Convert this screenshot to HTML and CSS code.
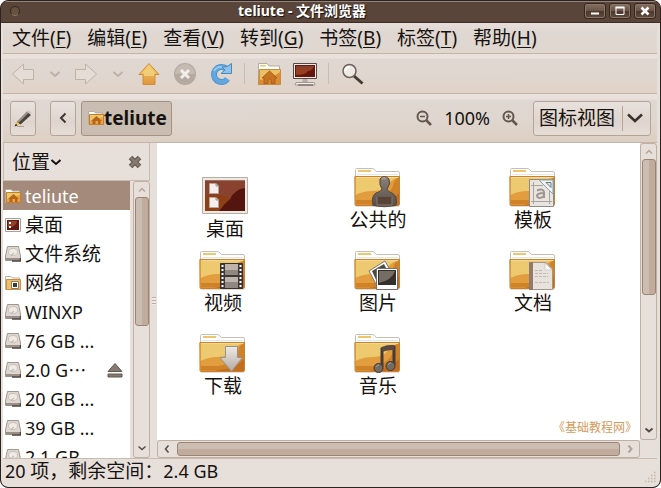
FILE: index.html
```html
<!DOCTYPE html>
<html lang="zh-CN">
<head>
<meta charset="utf-8">
<title>teliute - 文件浏览器</title>
<link rel="stylesheet" href="styles.css">
</head>
<body>
<svg class="defs" aria-hidden="true">
  <defs>
    <linearGradient id="steel" x1="0" y1="0" x2="0" y2="1"><stop offset="0" stop-color="#efe9e5"/><stop offset="1" stop-color="#b3a9a2"/></linearGradient>
    <linearGradient id="stone" x1="0" y1="0" x2="0" y2="1"><stop offset="0" stop-color="#8b8279"/><stop offset="1" stop-color="#554b45"/></linearGradient>
    <linearGradient id="gold" x1="0" y1="0" x2="0" y2="1"><stop offset="0" stop-color="#f0cd74"/><stop offset="1" stop-color="#e0963a"/></linearGradient>
    <symbol id="folder" viewBox="0 0 48 40">
      <path d="M1.500 9V1.500Q1.500.5 2.500.5H18Q20 .5 21 2L22.500 3.500H44Q45.500 3.500 45.500 5V9" fill="#fff" stroke="#c9beb5"/>
      <path d="M4 2H17V4H4Z" fill="#eec66b"/>
      <path d="M3 6.500H44" stroke="#ece5df"/>
      <path d="M2 38.500H45" stroke="#e8dcd2"/>
      <path d="M.5 9Q.5 8 1.500 8H45Q46 8 46 9L45 36.500Q45 37.500 44 37.500H2Q1 37.500 1 36.500Z" fill="#e19d3e"/>
      <path d="M1.500 9H45Q38 11 34 16Q30 23 19 23Q9 23 1.500 27Z" fill="#edca70"/>
      <path d="M45.500 9.500V36.500H2V32Q11 32 20 32Q37 29 40 14Q42 10 45.500 9.500Z" fill="#d08229"/>
      <path d="M20 36Q38 34 45 25V37H15Z" fill="#c36c20"/>
      <path d="M1 8.500H45.500V36.500Q45.500 37.500 44.500 37.500H2Q1 37.500 1 36.500Z" fill="none" stroke="#c7812f"/>
      <path d="M2 9.500H44" stroke="#f5d992"/>
    </symbol>
    <symbol id="mini-home" viewBox="0 0 16 16">
      <path d="M.5 14.500V1.500H6L7.500 3H14.500V14.500Z" fill="#fff" stroke="#b9aca0"/>
      <path d="M1.500 4.500H15.500V14.500H1.500Z" fill="#e8a448" stroke="#c77d2c"/>
      <path d="M2 5H15V7L8 9 2 11Z" fill="#edc76c"/>
      <path d="M8.500 6L14 11H12.500V14H10V11H7.500V14H4.500V11H3Z" fill="#b96519"/>
    </symbol>
    <symbol id="disk" viewBox="0 0 16 16">
      <path d="M2.500 .5H13.500L15.500 10V14.500H.5V10Z" fill="#ded7d1" stroke="#a0968d"/>
      <path d="M1 12H15V14.500H1Z" fill="#9a8f86"/>
      <path d="M7 15H15.500V12" fill="none" stroke="#4e4640" stroke-width="1.500"/>
      <ellipse cx="8" cy="6" rx="4.500" ry="3.500" fill="#eeeae6" stroke="#c9c0b8"/>
      <path d="M6 9.500L9 7" stroke="#b3a99f"/>
    </symbol>
    <symbol id="mini-desktop" viewBox="0 0 16 16">
      <path d="M.5 1.500H15.500V14.500H.5Z" fill="#fff" stroke="#ac9e93"/>
      <path d="M2 3H14V13H2Z" fill="#611a12"/><path d="M3 4H12Q11 8 7 10H3Z" fill="#944227"/>
      <path d="M4 5H6V7H4ZM4 9H6V11H4Z" fill="#fff"/>
    </symbol>
    <symbol id="mini-net" viewBox="0 0 16 16">
      <path d="M.5 14.500V1.500H6L7.500 3H14.500V14.500Z" fill="#fff" stroke="#b9aca0"/>
      <path d="M1.500 4.500H15.500V14.500H1.500Z" fill="#edc063" stroke="#d08d37"/>
      <path d="M6.500 6.500H13.500V13.500H6.500Z" fill="#fff" stroke="#887d74"/><path d="M8 8H12V12H8Z" fill="#3e3935"/>
    </symbol>
    <symbol id="down" viewBox="0 0 12 12"><path d="M1.500 4L6 8 10.500 4" fill="none" stroke="currentColor" stroke-width="2"/></symbol>
    <symbol id="arrow" viewBox="0 0 24 24"><path d="M1.500 12L12.500 2V7.500H22.500V17.500H12.500V22Z" fill="#e5dcd5" stroke="#c0b2a5"/></symbol>
  </defs>
</svg>

<div class="window">
  <header class="titlebar">
    <span class="orb"></span>
    <h1>teliute - 文件浏览器</h1>
    <div class="wm">
      <button aria-label="最小化"><svg viewBox="0 0 20 14"><path d="M6 9.500H14" stroke="#fff" stroke-width="2"/></svg></button>
      <button aria-label="最大化"><svg viewBox="0 0 20 14"><path d="M6 3.500H14V10.500H6Z" fill="none" stroke="#fff"/><path d="M5.500 3.500H14.500" stroke="#fff" stroke-width="2"/></svg></button>
      <button aria-label="关闭"><svg viewBox="0 0 20 14"><path d="M6.500 3.500L13.500 10.500M13.500 3.500L6.500 10.500" stroke="#fff" stroke-width="2.500"/></svg></button>
    </div>
  </header>

  <div class="frame">
  <nav class="menubar">
    <button>文件(<u>F</u>)</button><button>编辑(<u>E</u>)</button><button>查看(<u>V</u>)</button><button>转到(<u>G</u>)</button><button>书签(<u>B</u>)</button><button>标签(<u>T</u>)</button><button>帮助(<u>H</u>)</button>
  </nav>

  <div class="toolbar">
    <button aria-label="后退" disabled><svg class="i24"><use href="#arrow"/></svg></button>
    <button class="drop" aria-label="后退历史" disabled><svg class="i12"><use href="#down"/></svg></button>
    <button aria-label="前进" disabled><svg class="i24" viewBox="0 0 24 24"><path d="M22.500 12L11.500 2V7.500H1.500V17.500H11.500V22Z" fill="#e5dcd5" stroke="#c0b2a5"/></svg></button>
    <button class="drop" aria-label="前进历史" disabled><svg class="i12"><use href="#down"/></svg></button>
    <button aria-label="向上"><svg class="i24" viewBox="0 0 24 24"><path d="M12 1.500L22 12.500H18V22.500H6V12.500H2Z" fill="url(#gold)" stroke="#d58d31"/><path d="M12 3.500L19.500 11.500H17V14H7V11.500H4.500Z" fill="#f0cd76"/></svg></button>
    <button aria-label="停止" disabled><svg class="i24" viewBox="0 0 24 24"><circle cx="12" cy="12" r="11" fill="#b5aaa1"/><path d="M2 12A10 10 0 0 1 22 12Z" fill="#c5bbb3"/><path d="M8 8L16 16M16 8L8 16" stroke="#f3eeea" stroke-width="3"/></svg></button>
    <button aria-label="重新载入"><svg class="i24" viewBox="0 0 24 24"><path d="M18.500 17A7.500 7.500 0 1 1 17 6.500" fill="none" stroke="#4f93d0" stroke-width="6"/><path d="M18.500 17A7.500 7.500 0 1 1 17 6.500" fill="none" stroke="#62a8df" stroke-width="4"/><path d="M5 9Q8 3 17 6" fill="none" stroke="#94c8ec" stroke-width="2"/><path d="M22.500 1.500V11.500H12L16 8 13 5 18 4.500Z" fill="#8ec2e8" stroke="#4788c4"/></svg></button>
    <span class="sep"></span>
    <button aria-label="主文件夹"><svg class="i24" viewBox="0 0 24 24"><path d="M1.500 22V1.500H10L12 4H22.500V8" fill="#fff" stroke="#b8aa9e"/><path d="M3 3H9V4.500H3Z" fill="#eec66b"/><path d="M2.500 7.500H23.500V22.500H1.500Z" fill="#da8d31" stroke="#c98a3a"/><path d="M3 8H23V10Q16 16 3 18Z" fill="#ebc166"/><path d="M12.500 9L20 16H18V21.500H14V17H11V21.500H7V16H5Z" fill="#c47422" stroke="#b0611a"/></svg></button>
    <button aria-label="计算机"><svg class="i24" viewBox="0 0 24 24"><path d="M.5 1.500H23.500V16.500H.5Z" fill="#eee9e5" stroke="#544a44"/><path d="M2 3H22V15H2Z" fill="#64160f"/><path d="M3 4H21Q19 9 15 9Q13 13 3 13Z" fill="#963e1d"/><path d="M3 4H21Q19 7 13 7H3Z" fill="#85402e"/><path d="M10 17H14L15 20H9Z" fill="#b7ada4"/><path d="M3 20.500H21L22 23H2Z" fill="#efebe7" stroke="#a49a92"/><path d="M5 23H20" stroke="#5d544d"/></svg></button>
    <span class="sep"></span>
    <button aria-label="搜索"><svg class="i24" viewBox="0 0 24 24"><path d="M13 14L21.500 21.500" stroke="#453b35" stroke-width="3"/><circle cx="8.500" cy="9" r="6.500" fill="#eee9e5" stroke="#6e625a" stroke-width="1.500"/><path d="M4.500 9Q4.500 5 8.500 5" fill="none" stroke="#fff" stroke-width="2"/></svg></button>
  </div>

  <div class="location">
    <button class="raised narrow" aria-label="编辑位置"><svg class="i20" viewBox="0 0 20 20"><path d="M3 15L14 3.500 18 7 7 17Z" fill="#4a413b"/><path d="M5 14L15 4" stroke="#9b938b" stroke-width="2"/><path d="M3 13L8 17 2 18Z" fill="#ecc879"/><path d="M1.500 18.500L3 15.500 4.500 17.500Z" fill="#302a25"/><path d="M14 3.500L15.500 2 19 5 17.500 6.500Z" fill="#cfc8c1"/><path d="M4 18.500H11" stroke="#aaa098"/></svg></button>
    <button class="raised narrow prev" aria-label="上一级"><svg class="i12" viewBox="0 0 12 12"><path d="M8.500 1.500L4 6 8.500 10.500" fill="none" stroke="#413732" stroke-width="2"/></svg></button>
    <button class="raised path"><svg class="i16"><use href="#mini-home"/></svg>teliute</button>
    <div class="zoom">
      <button aria-label="缩小"><svg class="i16" viewBox="0 0 16 16"><circle cx="6.500" cy="6.500" r="5" fill="none" stroke="#65574e" stroke-width="2"/><path d="M4 6.500H9" stroke="#65574e" stroke-width="1.500"/><path d="M10.500 10.500L15 15" stroke="#65574e" stroke-width="2.500"/></svg></button>
      <span class="latin">100%</span>
      <button aria-label="放大"><svg class="i16" viewBox="0 0 16 16"><circle cx="6.500" cy="6.500" r="5" fill="none" stroke="#65574e" stroke-width="2"/><path d="M4 6.500H9M6.500 4V9" stroke="#65574e" stroke-width="1.500"/><path d="M10.500 10.500L15 15" stroke="#65574e" stroke-width="2.500"/></svg></button>
    </div>
    <div class="combo raised">
      <select aria-label="视图"><option>图标视图</option><option>列表视图</option></select>
      <svg class="i20" viewBox="0 0 20 20"><path d="M3 6.500L10 13 17 6.500" fill="none" stroke="#3b302b" stroke-width="2.500"/></svg>
    </div>
  </div>

  <main>
    <aside>
      <div class="side-head">
        <button>位置<svg class="i12"><use href="#down"/></svg></button>
        <button aria-label="关闭侧边栏"><svg class="i16" viewBox="0 0 16 16"><path d="M3.500 3.500L12.500 12.500M12.500 3.500L3.500 12.500" stroke="#5f5650" stroke-width="5"/><path d="M4 4L12 12M12 4L4 12" stroke="#85796f" stroke-width="3"/></svg></button>
      </div>
      <div class="side-body">
        <ul class="places">
          <li class="on latin"><svg class="i16"><use href="#mini-home"/></svg><span>teliute</span></li>
          <li><svg class="i16"><use href="#mini-desktop"/></svg><span>桌面</span></li>
          <li><svg class="i16"><use href="#disk"/></svg><span>文件系统</span></li>
          <li><svg class="i16"><use href="#mini-net"/></svg><span>网络</span></li>
          <li class="latin"><svg class="i16"><use href="#disk"/></svg><span>WINXP</span></li>
          <li class="latin"><svg class="i16"><use href="#disk"/></svg><span>76 GB ...</span></li>
          <li class="latin"><svg class="i16"><use href="#disk"/></svg><span>2.0 G⋯</span><button class="eject" aria-label="弹出"><svg class="i16" viewBox="0 0 16 16"><path d="M8 1.500L15 9.500H1Z" fill="#847a72" stroke="#625850"/><path d="M1 12H15V15H1Z" fill="#847a72" stroke="#625850"/></svg></button></li>
          <li class="latin"><svg class="i16"><use href="#disk"/></svg><span>20 GB ...</span></li>
          <li class="latin"><svg class="i16"><use href="#disk"/></svg><span>39 GB ...</span></li>
          <li class="latin"><svg class="i16"><use href="#disk"/></svg><span>2.1 GB</span></li>
        </ul>
        <div class="vbar side-bar">
          <svg class="i12 tip" viewBox="0 0 12 12"><path d="M3 7.500L6 4.500 9 7.500" fill="none" stroke="#b7a698" stroke-width="1.500"/></svg>
          <div class="thumb"></div>
          <svg class="i12 end" viewBox="0 0 12 12"><path d="M2.500 4.500L6 7.500 9.500 4.500" fill="none" stroke="#574c45" stroke-width="1.500"/></svg>
        </div>
      </div>
    </aside>
    <div class="splitter"><i></i></div>
    <section class="pane">
      <div class="view">
        <div class="files">
          <figure class="low"><svg class="icon" viewBox="0 0 48 40"><path d="M1.500 .5H46.500V36.500H1.500Z" fill="#eee8e3" stroke="#b9ada4"/><path d="M4 3H44V34H4Z" fill="#55150f"/><path d="M4 4H44V11Q34 12 29 22Q22 27 18 34H4Z" fill="#8a4230"/><path d="M4 18Q18 16 30 21Q23 27 18 34H4Z" fill="#8d3f16"/><path d="M4 3.500H44" stroke="#967364"/><path d="M8.500 6.500H15L17.500 9V16.500H8.500ZM8.500 20.500H15L17.500 23V30.500H8.500Z" fill="#f3efec" stroke="#b7a298"/><path d="M15 6V9H18M15 20V23H18" fill="none" stroke="#9d9088"/></svg><figcaption>桌面</figcaption></figure>
          <figure><svg class="icon" viewBox="0 0 48 40"><use href="#folder"/><path d="M19 37.500Q17 28 22 25Q27 24 28 21Q25 17 26 11Q30 6 35 11Q37 16 33 21Q34 24 38 25Q44 28 42 37.500Q30 40 19 37.500Z" fill="url(#stone)" stroke="#514741"/><path d="M23 29V37H38V29" fill="#594339" stroke="#887a70"/><path d="M28 11Q30 9 32 11" fill="none" stroke="#a79b91" stroke-width="2"/></svg><figcaption>公共的</figcaption></figure>
          <figure><svg class="icon" viewBox="0 0 48 40"><use href="#folder"/><path d="M20.500 11.500H44.500V38.500H20.500Z" fill="#e9e4e0" stroke="#8e8983"/><path d="M24.500 14V36M40.500 20V36M22 17.500H34M22 33.500H43" stroke="#aaa39d"/><path d="M28 22.500Q34 20 35 24V30M35 25Q28 25 28 28Q29 32 35 28" fill="none" stroke="#9d958e" stroke-width="2"/><path d="M30 12L44 26V12Z" fill="#f2f3f2" stroke="#83a5b2"/><path d="M37 14.500H42V19.500Z" fill="#dfe7e8" stroke="#777"/></svg><figcaption>模板</figcaption></figure>
          <figure><svg class="icon" viewBox="0 0 48 40"><use href="#folder"/><path d="M21.500 12.500H43.500V37.500H21.500Z" fill="#3d3835" stroke="#37312e"/><path d="M26 13H39V24H26ZM26 26H39V37H26Z" fill="#bdb4ad"/><path d="M26 19H39V24H26ZM26 31H39V37H26Z" fill="#8f8780"/><path d="M23.500 14V38M41.500 14V38" stroke="#fff" stroke-width="2" stroke-dasharray="2 2"/></svg><figcaption>视频</figcaption></figure>
          <figure><svg class="icon" viewBox="0 0 48 40"><use href="#folder"/><path d="M15 20L31 10 39 24 23 35Z" fill="#fff" stroke="#80766e"/><path d="M18 20L30 13 35 23 23 31Z" fill="#514941"/><path d="M22.500 17.500H43.500V38.500H22.500Z" fill="#fff" stroke="#766e67"/><path d="M24 19H42V34H24Z" fill="#332f2c"/><path d="M25 20H41Q38 29 25 32Z" fill="#756d64"/></svg><figcaption>图片</figcaption></figure>
          <figure><svg class="icon" viewBox="0 0 48 40"><use href="#folder"/><path d="M20.500 11.500H37L43.500 18V38.500H20.500Z" fill="#e8e2dd" stroke="#a0968e"/><path d="M20 11H24V39H20Z" fill="#927b6d"/><path d="M36 12V19H43Z" fill="#fff" stroke="#d2c9c2"/><path d="M26 19.500H34M26 22.500H39M26 25.500H39M26 31.500H40" stroke="#c3bab2" stroke-dasharray="3 1"/></svg><figcaption>文档</figcaption></figure>
          <figure><svg class="icon" viewBox="0 0 48 40"><use href="#folder"/><path d="M26.500 12.500H38.500V23.500H43.500L32.500 37.500 21 23.500H26.500Z" fill="url(#steel)" stroke="#9c9187"/></svg><figcaption>下载</figcaption></figure>
          <figure><svg class="icon" viewBox="0 0 48 40"><use href="#folder"/><path d="M28 33V15Q35 12 40 13V31" fill="none" stroke="#453c36" stroke-width="3"/><path d="M28 15.500Q34 13 40 13.500" fill="none" stroke="#5c4a40" stroke-width="5"/><circle cx="24.500" cy="34" r="4.500" fill="#746b63" stroke="#3d3530"/><circle cx="36.500" cy="32" r="4.500" fill="#746b63" stroke="#3d3530"/><path d="M22 33Q23 31 25 31M34 31Q35 29 37 29" fill="none" stroke="#aaa097"/></svg><figcaption>音乐</figcaption></figure>
        </div>
        <span class="mark">《基础教程网》</span>
      </div>
      <div class="vbar main-bar">
        <svg class="i12 tip" viewBox="0 0 12 12"><path d="M3 7.500L6 4.500 9 7.500" fill="none" stroke="#b7a698" stroke-width="1.500"/></svg>
        <div class="thumb"></div>
        <svg class="i12 end" viewBox="0 0 12 12"><path d="M2.500 4.500L6 7.500 9.500 4.500" fill="none" stroke="#574c45" stroke-width="2"/></svg>
      </div>
      <div class="hbar">
        <svg class="i12" viewBox="0 0 12 12"><path d="M7.500 2.500L4.500 6 7.500 9.500" fill="none" stroke="#574c45" stroke-width="1.500"/></svg>
        <div class="thumb"></div>
        <svg class="i12" viewBox="0 0 12 12"><path d="M4.500 2.500L7.500 6 4.500 9.500" fill="none" stroke="#b3a295" stroke-width="2"/></svg>
      </div>
    </section>
  </main>

  <footer>
    <p><span class="latin">20 </span>项，剩余空间：<span class="latin">2.4 GB</span></p>
    <svg class="grip" viewBox="0 0 12 12"><path d="M10 1.500H12M7 4.500H12M4 7.500H12M1 10.500H12" stroke="#c5b5a8" stroke-width="1.500" stroke-dasharray="1.500 1.500"/></svg>
  </footer>
  </div>
</div>
</body>
</html>
```
FILE: styles.css
```css
* { box-sizing: border-box; }
body {
  margin: 0;
  background: #fff;
  color: #161210;
  font: 19px/24px "Noto Sans", "Noto Sans CJK SC", sans-serif;
}
button, select { font: inherit; color: inherit; background: none; border: 0; padding: 0; margin: 0; }
button { display: flex; align-items: center; justify-content: center; }
svg { display: block; flex: none; }
.defs { position: absolute; width: 0; height: 0; }
.latin { font-size: 18px; }
.i12 { width: 12px; height: 12px; }
.i16 { width: 16px; height: 16px; }
.i20 { width: 20px; height: 20px; }
.i24 { width: 24px; height: 24px; }

.window {
  height: 100vh;
  display: flex;
  flex-direction: column;
  border: 1px solid #2c2320;
  border-radius: 8px;
  overflow: hidden;
  background: #5a453a;
}
.titlebar {
  flex: none;
  height: 22px;
  display: flex;
  align-items: center;
  padding: 0 4px 2px 9px;
  background: #5a453a;
  border-top: 1px solid #94837a;
  border-bottom: 1px solid #3c2d26;
}
.orb { width: 10px; height: 10px; border: 1px solid #35271f; border-bottom-color: #8b786c; border-radius: 50%; background: #66503f; }
h1 { flex: 1; margin: 0; text-align: center; font-size: 14px; line-height: 18px; font-weight: 700; color: #fff; text-shadow: 1px 1px 1px #17100c; }
.wm { display: flex; gap: 3px; }
.wm button { width: 22px; height: 16px; border: 1px solid #35271f; border-radius: 3px; background: linear-gradient(#85705f, #6b5446 50%, #4c382d 51%, #604b3e); box-shadow: inset 0 0 0 1px #8b776a; }
.wm svg { width: 20px; height: 14px; }

.frame {
  flex: 1;
  min-height: 0;
  display: flex;
  flex-direction: column;
  padding: 0 3px 1px 2px;
  background: #e7dfda;
  border-radius: 0 0 7px 7px;
}
.menubar {
  flex: none;
  display: flex;
  gap: 16px;
  height: 31px;
  padding: 0 9px;
  background: linear-gradient(#e8dfda, #dfd7d1 30%, #e0d7cf);
  border-bottom: 1px solid #c4b5a9;
}
u { text-decoration-thickness: 1px; text-underline-offset: 2px; }

.toolbar {
  flex: none;
  display: flex;
  align-items: center;
  gap: 12px;
  height: 40px;
  padding: 0 8px;
  background: linear-gradient(#eae1dc 4px, #dfd7d1 5px, #dfd6cf 22px, #e1d3c8);
  border-bottom: 1px solid #c4b5a9;
  color: #bfb1a5;
}
.drop { width: 15px; }
.sep { width: 1px; height: 21px; margin-left: -1px; background: #c9bcb1; }

.location {
  flex: none;
  display: flex;
  align-items: center;
  height: 49px;
  padding: 0 6px 0 7px;
  background: linear-gradient(#eae1dc 5px, #dfd7d1 6px, #dfd6cf 26px, #ddcfc3);
  border-bottom: 1px solid #c4b5a9;
}
.raised { height: 35px; border: 1px solid #b5a598; border-radius: 3px; background: linear-gradient(#e9e1dc, #dfd5ce 60%, #e6ddd6); }
.narrow { width: 26px; }
.prev { margin: 0 5px 0 14px; }
.path { padding: 0 4px 0 6px; background: #cabdb1; border-color: #a39183; font-weight: 700; }
.zoom { display: flex; align-items: center; gap: 12px; margin-left: auto; margin-right: 15px; }
.combo { position: relative; width: 118px; }
.combo::after { content: ""; position: absolute; right: 27px; top: 4px; bottom: 4px; border-left: 1px solid #b5a598; }
.combo select { appearance: none; width: 100%; height: 100%; padding-left: 5px; }
.combo svg { position: absolute; right: 5px; top: 6px; pointer-events: none; }

main { flex: 1; min-height: 0; display: flex; }
aside { flex: none; width: 147px; display: flex; flex-direction: column; }
.side-head {
  flex: none;
  height: 38px;
  display: flex;
  justify-content: space-between;
  align-items: center;
  padding: 0 6px 0 8px;
  border: 1px solid #cbbcb1;
  border-top: 0;
  background: #e7dfda;
}
.side-body { flex: 1; min-height: 0; display: flex; gap: 3px; }
.places { flex: 1; min-width: 0; margin: 0; padding: 0; list-style: none; background: #fff; overflow: hidden; }
.places li { display: flex; align-items: center; gap: 4px; height: 29px; padding: 0 7px 0 2px; white-space: nowrap; }
.places .on { background: #a38a7b; color: #fff; }
.eject { margin-left: auto; }

.vbar { display: flex; flex-direction: column; align-items: center; width: 17px; border: 1px solid #c1afa1; border-radius: 3px; background: #e7dfda; }
.vbar .thumb { width: 14px; border: 1px solid #9c8474; border-radius: 3px; background: linear-gradient(90deg, #cbbdb2 50%, #c0ab9c 51%); }
.tip { margin: 2px 0 1px; }
.end { margin: auto 0 3px; }
.side-bar .thumb { flex: 0 0 47%; }
.main-bar .thumb { flex: 0 0 46%; }

.splitter { flex: none; width: 7px; display: flex; align-items: center; justify-content: center; }
.splitter i { width: 4px; height: 8px; background: repeating-linear-gradient(#bdaea2 0 1px, #f0e9e4 1px 3px); }

.pane { flex: 1; min-width: 0; display: grid; grid-template: minmax(0, 1fr) 18px / minmax(0, 1fr) 17px; }
.view { position: relative; background: #fff; overflow: hidden; }
.files { display: grid; grid-template-columns: repeat(3, 100px); grid-auto-rows: 83px; column-gap: 55px; padding: 25px 0 0 16px; }
figure { margin: 0; display: flex; flex-direction: column; align-items: center; }
.low { padding: 9px 0 0 4px; }
.icon { width: 48px; height: 40px; }
.mark { position: absolute; right: 9px; bottom: 4px; font-size: 12px; line-height: 16px; color: #d39c5c; font-feature-settings: "halt"; }
.hbar { display: flex; align-items: center; border: 1px solid #c1afa1; border-radius: 3px; background: #e7dfda; padding: 0 3px; }
.hbar .thumb { flex: 1; height: 14px; margin: 0 4px; border: 1px solid #9c8474; border-radius: 3px; background: linear-gradient(#cbbdb2 50%, #c0ab9c 51%); }

footer { flex: none; height: 28px; display: flex; justify-content: space-between; align-items: flex-end; padding: 0 1px 3px 2px; border-top: 1px solid #c9bbb0; }
footer p { margin: 0; }
.grip { width: 12px; height: 12px; }
```
